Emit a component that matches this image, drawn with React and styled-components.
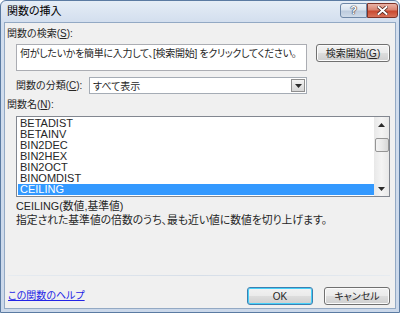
import React from "react";
import styled, { createGlobalStyle } from "styled-components";

const Global = createGlobalStyle`
  html, body { margin: 0; padding: 0; background: #ffffff; }
  body { font-family: "Liberation Sans", "Noto Sans CJK JP", sans-serif; font-size: 10px; }
`;

const Window = styled.div`
  box-sizing: border-box;
  width: 400px;
  height: 313px;
  display: flex;
  flex-direction: column;
  border: 1px solid #5b7ba2;
  border-radius: 6px 6px 0 0;
  background: linear-gradient(#e5edf6, #d2deee 22px, #cbd8ea);
  font-family: "Liberation Sans", "Noto Sans CJK JP", sans-serif;
  font-feature-settings: "palt";
  font-size: 10px;
  color: #262626;
`;

const TitleBar = styled.div`
  height: 21px;
  display: flex;
  align-items: flex-start;
  justify-content: space-between;
  padding: 0 1px 0 6px;
`;

const Title = styled.div`
  font-size: 11px;
  line-height: 14px;
  margin-top: 3px;
  color: #000;
`;

const CaptionButtons = styled.div`
  display: flex;
  margin-top: 2px;
`;

const CaptionButton = styled.div`
  box-sizing: border-box;
  height: 15px;
  width: ${(p) => p.$w}px;
  display: flex;
  align-items: center;
  justify-content: center;
  border: 1px solid ${(p) => (p.$close ? "#7d3328" : "#6e87a6")};
  border-radius: ${(p) => (p.$close ? "0 3px 3px 0" : "3px 0 0 3px")};
  background: ${(p) =>
    p.$close
      ? "linear-gradient(#eab3a6, #d98572 45%, #c9492f 55%, #d8735a)"
      : "linear-gradient(#eef3f8, #d9e3ee 45%, #bccbdd 55%, #cfdbe9)"};
  color: #fff;
  font: bold 11px/1 "Liberation Sans", sans-serif;
  text-shadow: 0 0 1px #334, 0 0 1px #334, 0 0 1px #334;
`;

const Client = styled.div`
  flex: 1;
  margin: 0 3px 3px;
  border: 1px solid #93a9c4;
  background: #f0f0f0;
  display: flex;
  flex-direction: column;
  padding: 4px 5px 3px 2px;
`;

const Label = styled.div`
  line-height: 14px;
  height: 14px;
  margin-top: ${(p) => p.$mt || 0}px;
  width: ${(p) => (p.$w ? `${p.$w}px` : "auto")};
  flex-shrink: 0;
  white-space: nowrap;
`;

const U = styled.span`
  text-decoration: underline;
`;

const SearchRow = styled.div`
  display: flex;
  align-items: flex-start;
  gap: 9px;
  margin: 3px 0 0 9px;
`;

const SearchBox = styled.div`
  box-sizing: border-box;
  width: 291px;
  height: 27px;
  border: 1px solid #abadb3;
  background: #fff;
  padding: 2px 3px;
  line-height: 13px;
  letter-spacing: -0.3px;
  white-space: nowrap;
  overflow: hidden;
`;

const PushButton = styled.div`
  box-sizing: border-box;
  width: ${(p) => p.$w}px;
  height: 18px;
  display: flex;
  align-items: center;
  justify-content: center;
  border: 1px solid ${(p) => (p.$focused ? "#3c7fb1" : "#707070")};
  border-radius: 3px;
  background: linear-gradient(#f2f2f2, #ebebeb 48%, #dddddd 52%, #cfcfcf);
  box-shadow: inset 0 0 0 1px ${(p) => (p.$focused ? "#48d1f9" : "#fbfbfb")};
  line-height: 13px;
  white-space: nowrap;
`;

const CategoryRow = styled.div`
  width: 291px;
  display: flex;
  align-items: center;
  gap: 4px;
  margin: 6px 0 0 9px;
`;

const Select = styled.div`
  box-sizing: border-box;
  flex: 1;
  height: 17px;
  display: flex;
  align-items: center;
  justify-content: space-between;
  border: 1px solid #a5acb5;
  background: #fff;
  padding: 0 1px 0 3px;
`;

const DropButton = styled.div`
  box-sizing: border-box;
  width: 14px;
  height: 13px;
  display: flex;
  align-items: center;
  justify-content: center;
  border: 1px solid #8f8f8f;
  background: linear-gradient(#f4f4f4, #e4e4e4 50%, #d6d6d6);
`;

const ListBox = styled.div`
  box-sizing: border-box;
  width: 374px;
  height: 81px;
  margin: 4px 0 0 9px;
  display: flex;
  border: 1px solid #828790;
  background: #fff;
`;

const Rows = styled.div`
  flex: 1;
  padding: 1px 0 0 1px;
`;

const Row = styled.div`
  height: 11px;
  line-height: 11px;
  padding-left: 2px;
  font-size: 11px;
  background: ${(p) => (p.$selected ? "#3399ff" : "transparent")};
  color: ${(p) => (p.$selected ? "#ffffff" : "#262626")};
`;

const ScrollBar = styled.div`
  width: 15px;
  display: flex;
  flex-direction: column;
  align-items: center;
  background: linear-gradient(90deg, #e8e8e8, #f4f4f4 50%, #e8e8e8);
`;

const ArrowBox = styled.div`
  width: 15px;
  height: 15px;
  display: flex;
  align-items: center;
  justify-content: center;
`;

const Thumb = styled.div`
  box-sizing: border-box;
  width: 14px;
  height: 14px;
  margin-top: 6px;
  border: 1px solid #959595;
  border-radius: 2px;
  background: linear-gradient(90deg, #f3f3f3, #e9e9e9 50%, #d8d8d8);
`;

const Spacer = styled.div`
  flex: 1;
`;

const Description = styled.div`
  margin: 2px 0 0 9px;
  line-height: 14px;
  font-size: 10.8px;
`;

const Separator = styled.div`
  margin: auto 0 0 1px;
  height: 1px;
  background: linear-gradient(90deg, #e6ebf0, #d6dee8 50%, #e6ebf0);
`;

const Footer = styled.div`
  display: flex;
  align-items: center;
  height: 18px;
  margin-top: 11px;
`;

const HelpLink = styled.a`
  margin-left: 1px;
  color: #2424e6;
  text-decoration: underline;
  line-height: 14px;
`;

const Buttons = styled.div`
  margin-left: auto;
  display: flex;
  gap: 11px;
`;

const Tri = ({ down }) => (
  <svg width="7" height="4" viewBox="0 0 7 4">
    <path d={down ? "M0 0h7L3.5 4z" : "M0 4h7L3.5 0z"} fill="#2b2b2b" />
  </svg>
);

const items = ["BETADIST", "BETAINV", "BIN2DEC", "BIN2HEX", "BIN2OCT", "BINOMDIST", "CEILING"];

export default function App() {
  return (
    <>
      <Global />
      <Window>
        <TitleBar>
          <Title>関数の挿入</Title>
          <CaptionButtons>
            <CaptionButton $w={27}>?</CaptionButton>
            <CaptionButton $w={31} $close>
              <svg width="11" height="9" viewBox="0 0 11 9">
                <path d="M1.5 1l8 7M9.5 1l-8 7" stroke="#4a1d16" strokeWidth="3.4" strokeLinecap="square" />
                <path d="M1.5 1l8 7M9.5 1l-8 7" stroke="#ffffff" strokeWidth="2" strokeLinecap="square" />
              </svg>
            </CaptionButton>
          </CaptionButtons>
        </TitleBar>
        <Client>
          <Label>
            関数の検索(<U>S</U>):
          </Label>
          <SearchRow>
            <SearchBox>何がしたいかを簡単に入力して、[検索開始] をクリックしてください。</SearchBox>
            <PushButton $w={74}>
              検索開始(<U>G</U>)
            </PushButton>
          </SearchRow>
          <CategoryRow>
            <Label $w={69}>
              関数の分類(<U>C</U>):
            </Label>
            <Select>
              <span>すべて表示</span>
              <DropButton>
                <Tri down />
              </DropButton>
            </Select>
          </CategoryRow>
          <Label $mt={4}>
            関数名(<U>N</U>):
          </Label>
          <ListBox>
            <Rows>
              {items.map((it) => (
                <Row key={it} $selected={it === "CEILING"}>
                  {it}
                </Row>
              ))}
            </Rows>
            <ScrollBar>
              <ArrowBox>
                <Tri />
              </ArrowBox>
              <Thumb />
              <Spacer />
              <ArrowBox>
                <Tri down />
              </ArrowBox>
            </ScrollBar>
          </ListBox>
          <Description>
            CEILING(数値,基準値)
            <br />
            指定された基準値の倍数のうち、最も近い値に数値を切り上げます。
          </Description>
          <Separator />
          <Footer>
            <HelpLink href="#">この関数のヘルプ</HelpLink>
            <Buttons>
              <PushButton $w={66} $focused>
                OK
              </PushButton>
              <PushButton $w={66}>キャンセル</PushButton>
            </Buttons>
          </Footer>
        </Client>
      </Window>
    </>
  );
}
